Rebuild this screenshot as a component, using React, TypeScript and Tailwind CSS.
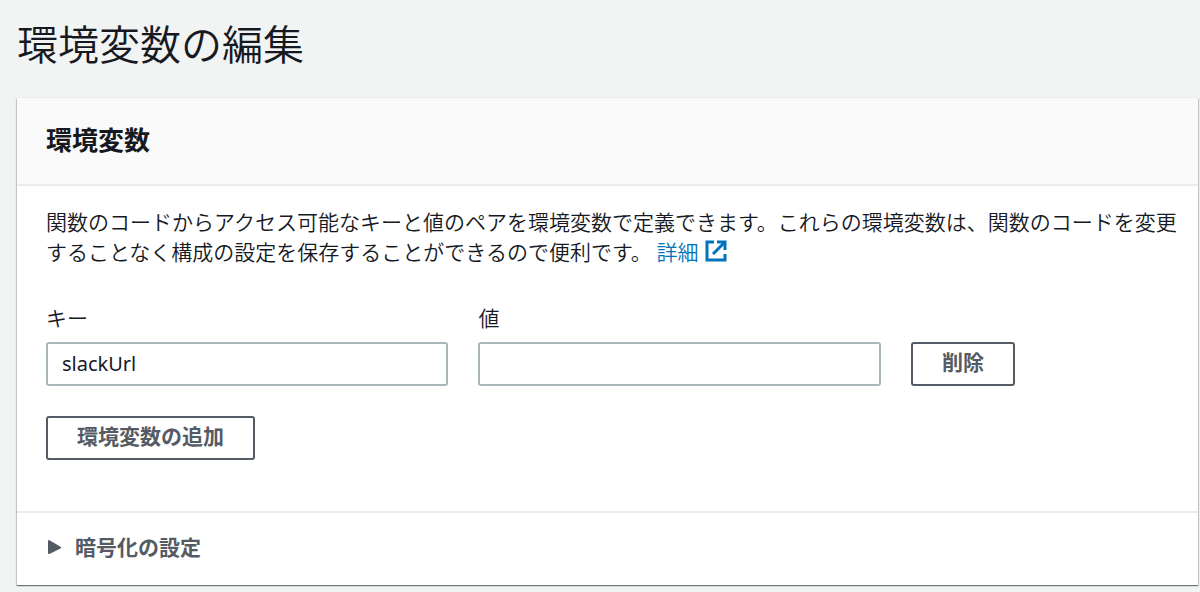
import React, { useState } from "react";

interface EnvVar {
  id: number;
  key: string;
  value: string;
}

export default function App() {
  const [vars, setVars] = useState<EnvVar[]>([{ id: 1, key: "slackUrl", value: "" }]);

  const addVar = () => {
    setVars([...vars, { id: Date.now(), key: "", value: "" }]);
  };

  const removeVar = (id: number) => {
    setVars(vars.filter((v) => v.id !== id));
  };

  const updateVar = (id: number, patch: Partial<EnvVar>) => {
    setVars(vars.map((v) => (v.id === id ? { ...v, ...patch } : v)));
  };

  return (
    <main className="min-h-screen bg-[#f2f3f3] pt-3.5 pr-0.5 pb-2 pl-[17px] font-['Noto_Sans_CJK_JP',sans-serif] text-[21px] leading-[30px] text-[#16191f]">
      <h1 className="text-[41px] leading-[56px] font-[350]">環境変数の編集</h1>

      <section className="mt-7 bg-white shadow-[0_1px_1px_0_rgba(0,28,36,0.4),1px_1px_1px_0_rgba(0,28,36,0.15),-1px_1px_1px_0_rgba(0,28,36,0.15),0_-1px_0_0_#eaeded]">
        <header className="border-b-2 border-[#eaeded] bg-[#fafafa] px-[29px] pt-[22px] pb-[26px]">
          <h2 className="text-[26px] leading-[38px] font-bold">環境変数</h2>
        </header>

        <div className="pt-5 pb-[51px] pl-[29px]">
          <p className="pr-3 font-[350]">
            <span>
              関数のコードからアクセス可能なキーと値のペアを環境変数で定義できます。これらの環境変数は、関数のコードを変更することなく構成の設定を保存することができるので便利です。
            </span>{" "}
            <a href="#details" className="inline-flex items-center gap-1.5 align-bottom text-[#0073bb] hover:underline">
              詳細
              <ExternalIcon />
            </a>
          </p>

          <div className="mt-9 flex flex-col gap-[30px] pr-[34px]">
            {vars.map((v) => (
              <VarRow
                key={v.id}
                item={v}
                onChange={(patch) => updateVar(v.id, patch)}
                onRemove={() => removeVar(v.id)}
              />
            ))}
            <Button onClick={addVar}>環境変数の追加</Button>
          </div>
        </div>

        <details className="group border-t-2 border-[#eaeded]">
          <summary className="flex cursor-pointer list-none items-center gap-[14px] px-[31px] pt-[18px] pb-6 font-bold text-[#545b64]">
            <svg viewBox="0 0 13 16" className="h-4 w-[13px] group-open:rotate-90" aria-hidden="true">
              <path d="M1 3 12 9.5 1 15Z" fill="currentColor" stroke="currentColor" strokeWidth="2" strokeLinejoin="round" />
            </svg>
            暗号化の設定
          </summary>
        </details>
      </section>
    </main>
  );
}

interface VarRowProps {
  item: EnvVar;
  onChange: (patch: Partial<EnvVar>) => void;
  onRemove: () => void;
}

function VarRow({ item, onChange, onRemove }: VarRowProps) {
  return (
    <div className="grid grid-cols-[36%_36%_auto] items-end justify-start gap-[30px]">
      <Field label="キー" value={item.key} onChange={(key) => onChange({ key })} />
      <Field label="値" value={item.value} onChange={(value) => onChange({ value })} />
      <Button onClick={onRemove}>削除</Button>
    </div>
  );
}

interface FieldProps {
  label: string;
  value: string;
  onChange: (value: string) => void;
}

function Field({ label, value, onChange }: FieldProps) {
  return (
    <label className="flex flex-col gap-2.5 font-[350]">
      {label}
      <input
        type="text"
        value={value}
        onChange={(e) => onChange(e.target.value)}
        className="h-11 w-full rounded-[3px] border-2 border-[#aab7b8] bg-white px-3.5 pb-0.5 font-['Noto_Sans','Noto_Sans_CJK_JP',sans-serif] text-[20px] font-normal outline-none focus:border-[#00a1c9]"
      />
    </label>
  );
}

function Button({ onClick, children }: { onClick: () => void; children: React.ReactNode }) {
  return (
    <button
      type="button"
      onClick={onClick}
      className="h-11 self-start rounded-[3px] border-2 border-[#545b64] bg-white px-[29px] pb-1.5 font-bold text-[#545b64] hover:bg-[#fafafa] [.grid>&]:self-end"
    >
      {children}
    </button>
  );
}

function ExternalIcon() {
  return (
    <svg
      viewBox="0 0 22 22"
      className="h-[22px] w-[22px]"
      fill="none"
      stroke="currentColor"
      strokeWidth="3"
      aria-hidden="true"
    >
      <path d="M9 2H2v18h18v-6" />
      <path d="M12 2h8v8" />
      <path d="M19.5 2.5 8 14" />
    </svg>
  );
}
